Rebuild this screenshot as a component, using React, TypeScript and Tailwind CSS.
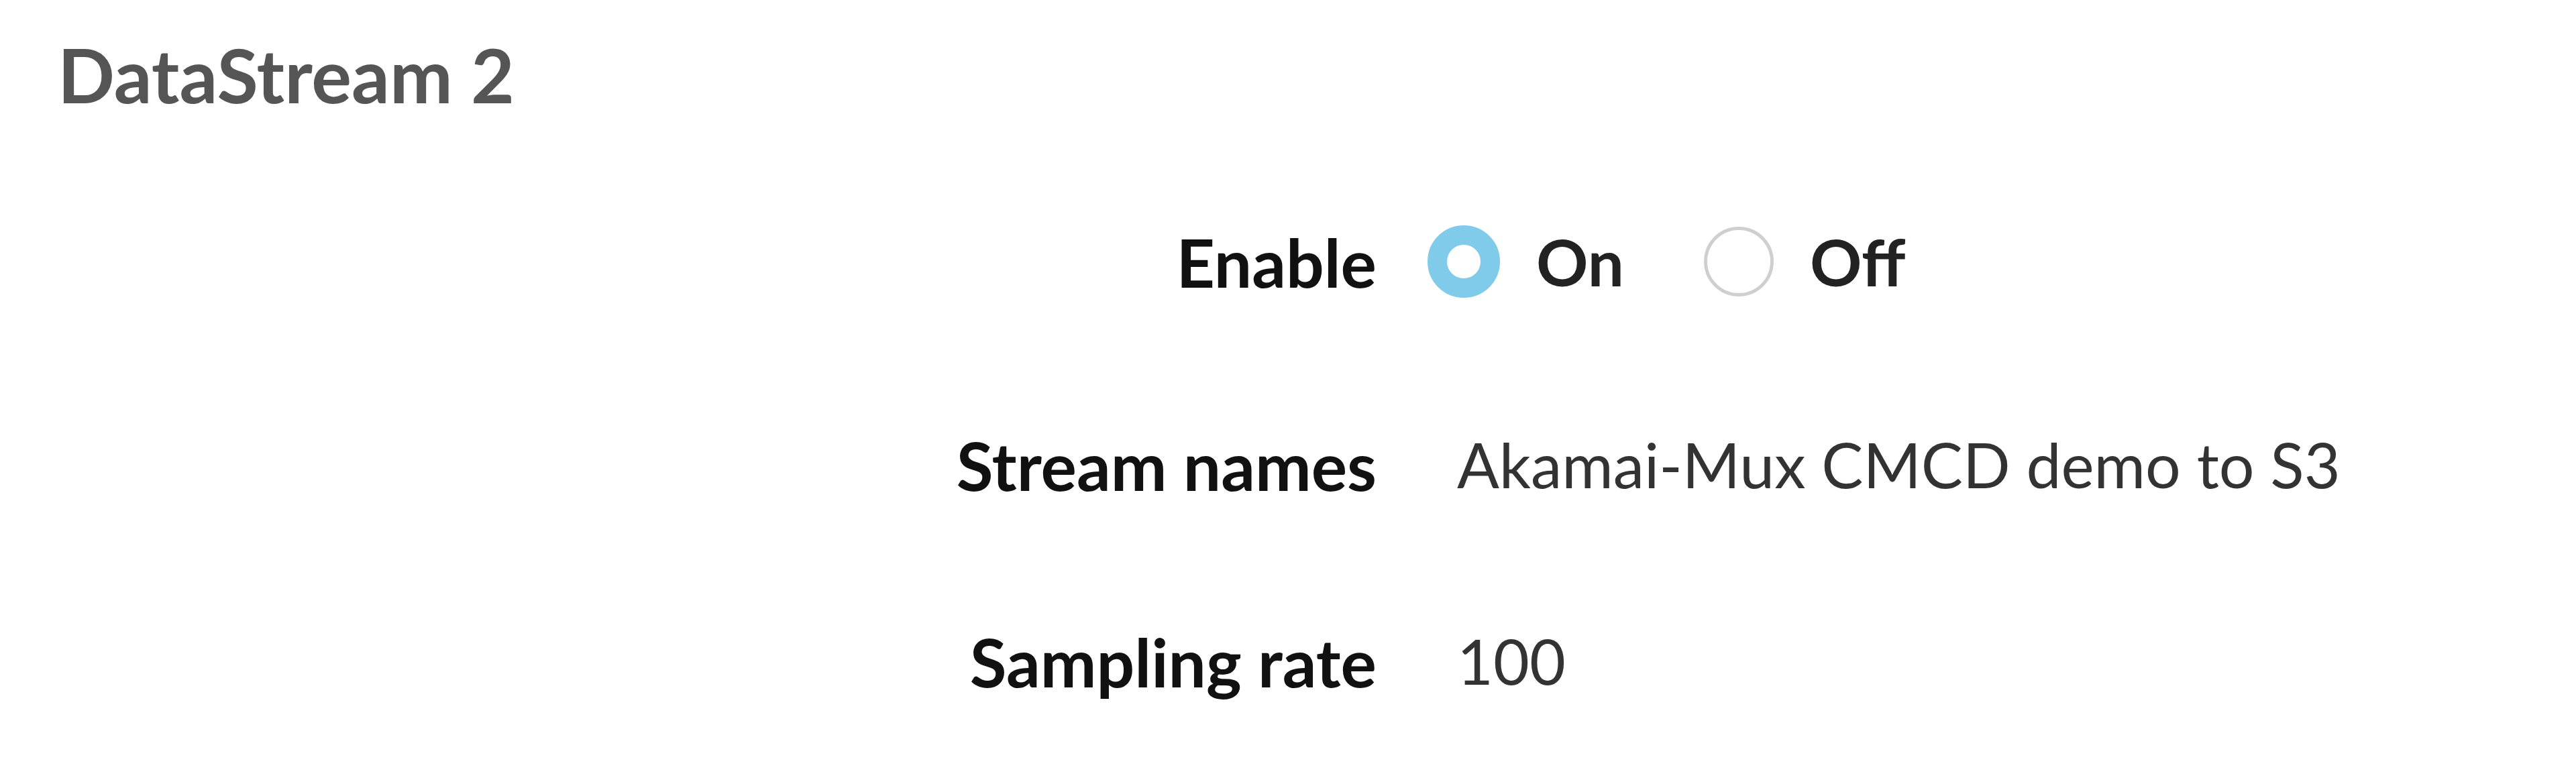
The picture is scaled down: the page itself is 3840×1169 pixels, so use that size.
import React from "react";

const font = { fontFamily: "Lato, 'Liberation Sans', sans-serif" };

function Radio({ checked }: { checked?: boolean }) {
  return checked ? (
    <span className="inline-block w-[108px] h-[108px] rounded-full border-[29px] border-[#80cbea] bg-white" />
  ) : (
    <span className="inline-block w-[104px] h-[104px] rounded-full border-[5px] border-[#cfcfcf] bg-white" />
  );
}

function Row({ label, className, children }: { label: string; className?: string; children: React.ReactNode }) {
  return (
    <div className={"flex items-center " + (className ?? "h-[300px]")}>
      <div className="w-[2052px] shrink-0 text-right font-bold text-[100px] text-[#111]">{label}</div>
      {children}
    </div>
  );
}

export default function App() {
  return (
    <div className="w-[3840px] h-[1169px] bg-white overflow-hidden" style={font}>
      <h2 className="pl-[86px] pt-[36px] h-[150px] text-[112px] leading-[150px] font-bold text-[#555]">DataStream 2</h2>
      <div className="flex flex-col mt-[80px]">
        <Row label="Enable" className="h-[320px]">
          <div className="flex items-center ml-[76px] text-[96px] font-bold text-[#222]">
            <Radio checked />
            <span className="ml-[54px]">On</span>
            <span className="ml-[119px] flex items-center">
              <Radio />
            </span>
            <span className="ml-[54px]">Off</span>
          </div>
        </Row>
        <Row label="Stream names" className="h-[286px]">
          <div className="ml-[120px] text-[93px] text-[#333]">Akamai-Mux CMCD demo to S3</div>
        </Row>
        <Row label="Sampling rate" className="h-[300px]">
          <div className="ml-[120px] text-[93px] text-[#333]">100</div>
        </Row>
      </div>
    </div>
  );
}
